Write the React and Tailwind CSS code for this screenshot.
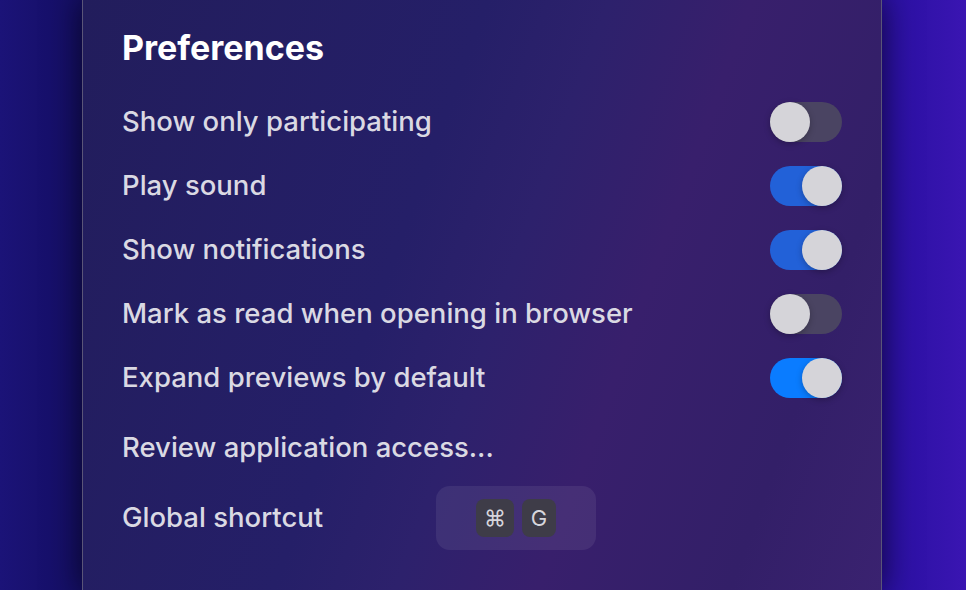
import { useState } from "react";

const prefs = [
  { label: "Show only participating", on: false, tone: "blue" },
  { label: "Play sound", on: true, tone: "blue" },
  { label: "Show notifications", on: true, tone: "blue" },
  { label: "Mark as read when opening in browser", on: false, tone: "blue" },
  { label: "Expand previews by default", on: true, tone: "bright" },
];

function Toggle({ on, tone, onClick }) {
  const track = on
    ? tone === "bright"
      ? "bg-[#0a7cff]"
      : "bg-[#2261d8]"
    : "bg-[#4a4462]";
  return (
    <button
      onClick={onClick}
      className={`relative h-10 w-[72px] shrink-0 rounded-full ${track}`}
    >
      <span
        className={`absolute top-0 h-10 w-10 rounded-full bg-[#d5d4d9] shadow-[0_2px_6px_rgba(0,0,0,0.25)] ${
          on ? "left-8" : "left-0"
        }`}
      />
    </button>
  );
}

export default function App() {
  const [state, setState] = useState(prefs.map((p) => p.on));

  return (
    <div
      className="flex h-[590px] w-full overflow-hidden bg-[linear-gradient(90deg,#1b1378_0%,#140e63_8.5%,#0d0950_8.5%,#2a10a0_91.5%,#2c11a4_93%,#3a15b2_100%)]"
      style={{ fontFamily: "Inter, 'Noto Sans', sans-serif" }}
    >
      <div className="relative ml-[82px] flex h-full w-[800px] flex-col border-x border-[#5a5578] bg-[linear-gradient(110deg,#221d5c_0%,#251f68_40%,#2d216c_52%,#381f6c_66%,#331f68_85%,#3a2270_100%)] px-[39px] pt-7 shadow-[0_0_30px_rgba(0,0,0,0.6)]">
        <h1 className="text-[34px] font-bold leading-10 text-white">
          Preferences
        </h1>

        <div className="mt-[34px] flex flex-col gap-6">
          {prefs.map((p, i) => (
            <div key={p.label} className="flex h-10 items-center justify-between">
              <span className="text-[27.5px] font-medium text-[#dad9e3]">
                {p.label}
              </span>
              <Toggle
                on={state[i]}
                tone={p.tone}
                onClick={() =>
                  setState((s) => s.map((v, j) => (j === i ? !v : v)))
                }
              />
            </div>
          ))}
        </div>

        <div className="mt-[30px] flex h-10 items-center">
          <span className="text-[27.5px] font-medium text-[#dad9e3]">
            Review application access...
          </span>
        </div>

        <div className="mt-[18px] flex h-16 items-center">
          <span className="w-[314px] text-[27.5px] font-medium text-[#dad9e3]">
            Global shortcut
          </span>
          <div className="flex h-16 w-40 items-center justify-center gap-2 rounded-[14px] bg-white/[0.07]">
            <span className="flex h-[38px] w-[38px] items-center justify-center rounded-lg bg-[#3e3c48] text-[22px] text-[#d6d5dc]">
              ⌘
            </span>
            <span className="flex h-[38px] w-[34px] items-center justify-center rounded-lg bg-[#3e3c48] text-[22px] text-[#d6d5dc]">
              G
            </span>
          </div>
        </div>
      </div>
    </div>
  );
}
